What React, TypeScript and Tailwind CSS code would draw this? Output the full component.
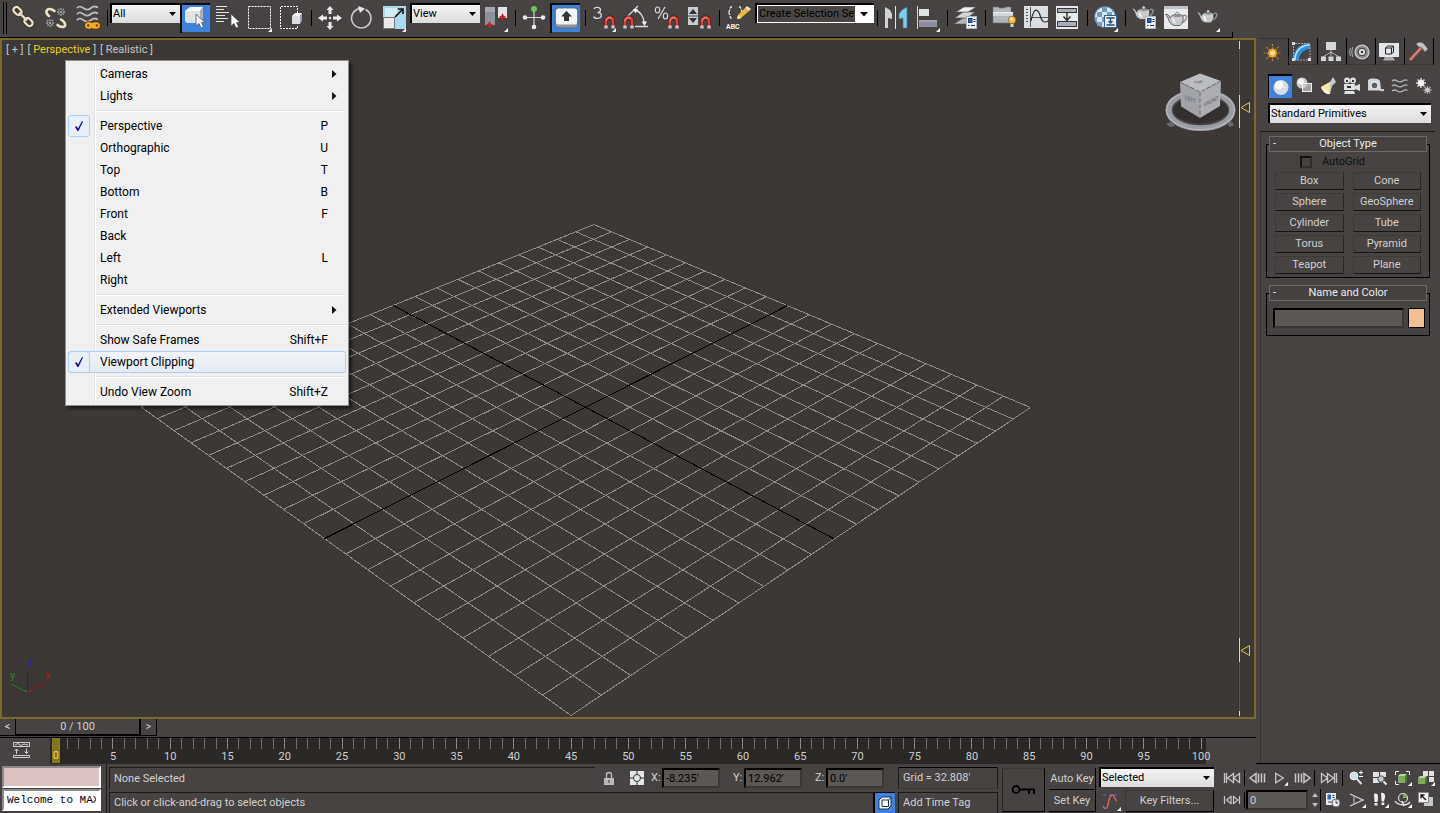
import type { ReactNode } from "react";

const UI = "font-['Roboto','Open_Sans',sans-serif]";

/* ---------- helpers ---------- */

function Flyout({ x = 28, y = 28 }: { x?: number; y?: number }) {
  return <path d={`M${x} ${y}v4h-4z`} fill="#fff" />;
}

function Tool({ label, active, fly, children }: { label: string; active?: boolean; fly?: boolean; children: ReactNode }) {
  return (
    <button type="button" aria-label={label} aria-pressed={active} className="block h-9 w-8 shrink-0">
      <svg width="32" height="36" viewBox="0 0 32 36" fill="none">
        {active && (
          <>
            <path d="M1 33V4h29" stroke="#0c0c0c" strokeWidth="2" />
            <rect x="2" y="5" width="28" height="27" fill="#3f82dc" />
          </>
        )}
        {children}
        {fly && <Flyout />}
      </svg>
    </button>
  );
}

function Sep() {
  return (
    <div className="flex h-9 w-[6px] shrink-0 items-center justify-center">
      <div className="h-4 w-px bg-black" />
    </div>
  );
}

function Picker({ label, value, className, options }: { label: string; value: string; className: string; options?: string[] }) {
  return (
    <div className={`relative shrink-0 border-l-2 border-t-2 border-black bg-linear-to-b from-[#f4f4f4] to-[#dcdcdc] ${className}`}>
      <select aria-label={label} defaultValue={value} className="block h-full w-full appearance-none bg-transparent pl-px text-[11px] leading-4 text-black outline-none">
        {(options ?? [value]).map((o) => (
          <option key={o}>{o}</option>
        ))}
      </select>
      <svg className="pointer-events-none absolute right-1 top-[7px]" width="7" height="4" viewBox="0 0 7 4">
        <path d="M0 0h7L3.500 4z" fill="#000" />
      </svg>
    </div>
  );
}

function Magnet({ x, y }: { x: number; y: number }) {
  return (
    <g transform={`translate(${x} ${y})`}>
      <path d="M2 10V5a3.500 3.500 0 0 1 7 0v5" stroke="#3a0f0f" strokeWidth="4" />
      <path d="M2 10V5a3.500 3.500 0 0 1 7 0v5" stroke="#d8403c" strokeWidth="2.800" />
      <path d="M2 5.500a3.500 3.500 0 0 1 5.500-3" stroke="#f29a92" strokeWidth="1" />
      <path d="M.3 9.500h3.400v3H.3zM7.300 9.500h3.400v3H7.300z" fill="#c4c7ce" />
    </g>
  );
}

function Teapot({ x = 0, y = 0, s = 1 }: { x?: number; y?: number; s?: number }) {
  return (
    <g transform={`translate(${x} ${y}) scale(${s})`}>
      <path d="M17 5.500c3-2.500 5-.5 3.500 2.500-.8 2-2.500 3.500-4.500 4" stroke="#8f9093" strokeWidth="1.500" />
      <path d="M0 3.500c2-.8 3.500.5 4.500 3.500l2-2.500c3-1.500 7.500-1.500 10.500 0 1.500 4 .3 7.500-2.500 10H8.500C5 13 4 11.500 3.300 9 2.500 6.500 1.500 5 0 3.500z" fill="#c9cacc" stroke="#48494c" strokeWidth=".8" />
      <path d="M7 5c3-1.200 6.500-1.200 9.500 0-3 1.200-6.500 1.200-9.500 0z" fill="#8b8c90" />
      <path d="M7.500 7.500c.3 2 1 3.500 2 4.500" stroke="#fff" strokeWidth="1.500" />
      <circle cx="11.700" cy="2.500" r="1.500" fill="#dcdcdc" stroke="#555" strokeWidth=".5" />
    </g>
  );
}

function Dialog({ x, y }: { x: number; y: number }) {
  return (
    <g transform={`translate(${x} ${y})`}>
      <rect x=".5" y=".5" width="10" height="12" fill="#f1f3f6" stroke="#a9b5c6" />
      <rect x="2.500" y="2.500" width="3.500" height="4" fill="#2a6bc4" stroke="#123d7b" />
      <path d="M7.500 3.500h2M7.500 5.500h2M2 9.500h1.500M5 9.500h4" stroke="#17365f" />
    </g>
  );
}

function Arrow({ x, y }: { x: number; y: number }) {
  return <path transform={`translate(${x} ${y})`} d="M0 0v12l3-2.500 2 4.500 2.500-1-2-4.500H9z" fill="#fff" stroke="#3d4654" strokeWidth=".7" />;
}

/* ---------- main toolbar ---------- */

function MainToolbar() {
  return (
    <header className="flex h-[38px] shrink-0 pr-[207px]">
      <div className="flex h-full flex-1 items-start border-b border-black">
        <div className="mr-px mt-[2px] flex h-8 w-[7px] shrink-0 gap-[2px] pl-[3px]">
          <div className="w-px bg-black" />
          <div className="w-px bg-black" />
        </div>
        <Tool label="Select and Link">
          <g stroke="#3c352b" strokeWidth="4.400">
            <rect x="5" y="8" width="9" height="6" rx="3" transform="rotate(42 9.500 11)" />
            <rect x="16" y="19" width="9" height="6" rx="3" transform="rotate(42 20.500 22)" />
          </g>
          <g stroke="#eadfc8" strokeWidth="2.300">
            <rect x="5" y="8" width="9" height="6" rx="3" transform="rotate(42 9.500 11)" />
            <rect x="16" y="19" width="9" height="6" rx="3" transform="rotate(42 20.500 22)" />
            <path d="M11 12.500l8 8" />
          </g>
        </Tool>
        <Tool label="Unlink Selection">
          <g stroke="#eee1c6" strokeWidth="2.600" strokeLinecap="round">
            <path d="M9 16c-4-3-3-7 .5-7 2 0 3.500.8 5 2" />
            <path d="M21 19.500c5 3 5.500 7.500 1.500 7.500-2 0-3.500-.8-5-2" />
          </g>
          <g stroke="#a4a7aa" strokeWidth="1.300" strokeDasharray="2 1">
            <path d="M17 12h8M21 8v8M18 9l6 6M24 9l-6 6M6 23h8M10 19v8M7 20l6 6M13 20l-6 6" />
          </g>
        </Tool>
        <Tool label="Bind to Space Warp">
          {[8, 14, 20].map((y) => (
            <path key={y} d={`M5 ${y}c3-3 5-1 7 .5s5 1.500 7-.5 4-2 7-.5`} stroke="#b8bbbd" strokeWidth="1.800" />
          ))}
          <path d="M14 25.500c0-3 6-3 6 0s-6 3-6 0zM20 25.500c0-3 7-3 7 0s-7 3-7 0z" stroke="#5a3c08" strokeWidth="3.800" />
          <path d="M14 25.500c0-3 6-3 6 0s-6 3-6 0zM20 25.500c0-3 7-3 7 0s-7 3-7 0zM17 25.500h7" stroke="#f2ae2b" strokeWidth="1.900" />
        </Tool>
        <Sep />
        <Picker label="Selection Filter" value="All" className="mt-[3px] h-5 w-[70px]" />
        <Tool label="Select Object" active>
          <path d="M5 11l5-4h13l-3 4z" fill="#fff" />
          <path d="M5 11h15v12H7l-2-2z" fill="#dfe3e8" />
          <path d="M20 11l3-4v12l-3 4z" fill="#a9b3c1" />
          <Arrow x={16} y={14} />
        </Tool>
        <Tool label="Select by Name">
          <path d="M4 6.500h11M4 9.500h8M4 12.500h13M4 15.500h9M4 18.500h12M4 21.500h8" stroke="#e4e4e4" />
          <Arrow x={19} y={14} />
        </Tool>
        <Tool label="Rectangular Selection Region" fly>
          <rect x="4.500" y="6.500" width="22" height="22" stroke="#fff" strokeDasharray="2 1" />
        </Tool>
        <Tool label="Window/Crossing">
          <path d="M21.500 13V6.500h-17v22h17V25" stroke="#fff" strokeDasharray="2 1" />
          <path d="M16 16l3-3h7l-2 3z" fill="#fff" />
          <path d="M16 16h8v8h-8z" fill="#dcdfe4" />
          <path d="M24 16l2-3v8l-2 3z" fill="#9aa2ad" />
        </Tool>
        <Sep />
        <Tool label="Select and Move">
          <path d="M16 6l3.500 4H17.500v4h-3v-4H12.500zM16 30l3.500-4H17.500v-4h-3v4H12.500zM4 18l5-3.500v2h4v3H9v2zM28 18l-5-3.500v2h-4v3h4v2z" fill="#ececec" />
          <circle cx="16" cy="18" r="1.200" fill="#ececec" />
        </Tool>
        <Tool label="Select and Rotate">
          <path d="M19.500 9.500A9.700 9.700 0 1 1 14 8.600" stroke="#c9c9c9" strokeWidth="1.600" />
          <path d="M12 6l7 2.500-5 4.500z" fill="#e6e6e6" />
        </Tool>
        <Tool label="Select and Uniform Scale" fly>
          <rect x="5" y="6" width="23" height="23" fill="#a9d9ee" />
          <path d="M7 8h12v9H7z" fill="#d2edf8" />
          <rect x="5.500" y="17.500" width="11" height="11" fill="#e9eaec" stroke="#777" />
          <path d="M17 17l7-7M20 9h5v5" stroke="#111" strokeWidth="1.600" />
        </Tool>
        <Picker label="Reference Coordinate System" value="View" className="mt-[3px] h-5 w-[70px]" />
        <Tool label="Use Pivot Point Center" fly>
          <path d="M5 7h10v18H5z" fill="#8d919b" />
          <path d="M5 7h10v5H5z" fill="#a5a8b1" />
          <path d="M18 7h9v11h-9z" fill="#e3e4e8" />
          <path d="M9.500 21l1.300 2.700 2.700 1.300-2.700 1.300-1.300 2.700-1.300-2.700L5.500 25l2.700-1.300zM22.500 13l1.300 2.700 2.700 1.300-2.700 1.300-1.300 2.700-1.300-2.700-2.700-1.300 2.700-1.300z" fill="#c41f1f" />
        </Tool>
        <Sep />
        <Tool label="Select and Manipulate">
          <path d="M16 10v17M7 17.500h18" stroke="#d9d9d9" strokeWidth="1.200" />
          <circle cx="16" cy="9" r="3" fill="#6cc45c" />
          <circle cx="16" cy="27" r="2.300" fill="#eee" />
          <circle cx="7" cy="17.500" r="2.300" fill="#eee" />
          <circle cx="25" cy="17.500" r="2.300" fill="#eee" />
        </Tool>
        <Tool label="Keyboard Shortcut Override" active>
          <rect x="5" y="8" width="23" height="20" rx="3" fill="#8d959f" stroke="#444d59" strokeWidth=".6" />
          <rect x="6" y="8.500" width="21" height="16" rx="2.500" fill="#f4f5f6" />
          <path d="M16.500 11l5.500 5.500h-3V21h-5v-4.500h-3z" fill="#333" />
        </Tool>
        <Sep />
        <Tool label="Snaps Toggle" fly>
          <path d="M6 9c.5-2 6.500-2.500 6.500 1 0 2-1.500 2.500-3 2.500 2 0 3.800.5 3.800 3 0 3.600-7 3.500-7.600 1" stroke="#d8d8d8" strokeWidth="1.300" />
          <Magnet x={16} y={16} />
        </Tool>
        <Tool label="Angle Snap Toggle">
          <path d="M8 16L18 6M15 26.500h13" stroke="#d8d8d8" strokeWidth="1.300" />
          <path d="M15 10c5 1 9 7 9.500 14" stroke="#e8e8e8" strokeWidth="1.300" />
          <path d="M13 9h5l-2.500 4.500zM21.500 21.500h5.500L24.500 26z" fill="#eee" />
          <Magnet x={3} y={16} />
        </Tool>
        <Tool label="Percent Snap Toggle">
          <path d="M13 7L6 19" stroke="#d8d8d8" strokeWidth="1.200" />
          <ellipse cx="5.500" cy="10" rx="2.200" ry="3" stroke="#d8d8d8" strokeWidth="1.200" />
          <ellipse cx="13.500" cy="16" rx="2.200" ry="3" stroke="#d8d8d8" strokeWidth="1.200" />
          <Magnet x={16} y={16} />
        </Tool>
        <Tool label="Spinner Snap Toggle">
          <rect x="4" y="7" width="10" height="18" fill="#c9ccd1" />
          <path d="M4 16h10" stroke="#44484f" />
          <path d="M9 9l4 5H5zM9 23l4-5H5z" fill="#2f3238" />
          <Magnet x={16} y={16} />
        </Tool>
        <Sep />
        <Tool label="Edit Named Selection Sets">
          <path d="M10 6.500c-3 0-1.500 6-4 6 2.500 0 1 6 4 6M17 6.500c3 0 1.500 6 4 6-2.500 0-1 6-4 6" stroke="#e4e4e4" strokeWidth="1.400" strokeDasharray="3 1" />
          <path d="M15 19l1-4L23 8l4 3-8 7z" fill="#f0b63a" />
          <path d="M23 8l2-2 4 3-2 2z" fill="#f1e3c4" />
          <path d="M15 19l1-4 3 3z" fill="#fbe6b4" />
          <text x="4" y="29" fill="#fff" fontSize="7" fontWeight="600" fontFamily="Roboto, sans-serif">ABC</text>
        </Tool>
        <div className="ml-px mt-[3px] flex h-5 w-[119px] shrink-0 border-l-2 border-t-2 border-black">
          <div className="flex w-full border border-white">
            <input aria-label="Named Selection Sets" defaultValue="Create Selection Set" className="w-[97px] min-w-0 bg-[#4a4645] pl-px text-[11px] leading-4 text-black outline-none" />
            <button type="button" aria-label="Open list" className="flex flex-1 items-center justify-center bg-white">
              <svg width="8" height="5" viewBox="0 0 8 5">
                <path d="M0 0h8L4 4.500z" fill="#000" />
              </svg>
            </button>
          </div>
        </div>
        <Sep />
        <Tool label="Mirror">
          <path d="M5 7l5 3 2 4v5l-4-1v10H5z" fill="#cfd2d6" />
          <path d="M15.500 6v23" stroke="#e2e2e2" />
          <path d="M27 7v21h-4V18l-4 1v-5l3-4z" fill="#82cbea" stroke="#3f7f9d" strokeWidth=".8" />
        </Tool>
        <Tool label="Align" fly>
          <path d="M5.500 6v23" stroke="#d5d5d5" />
          <rect x="7" y="9" width="10" height="7" fill="#dfe0e2" />
          <rect x="7" y="20" width="18" height="7" fill="#8e919c" />
          <path d="M7 21h18" stroke="#b9bbc4" />
        </Tool>
        <Sep />
        <Tool label="Layer Manager">
          <path d="M4 24l9-6h12l-9 6z" fill="#b8b8b8" stroke="#555" strokeWidth=".6" />
          <path d="M5 18l8-6h12l-8 6z" fill="#d4d4d4" stroke="#555" strokeWidth=".6" />
          <path d="M6 12l8-5h12l-8 5z" fill="#f0f0f0" stroke="#555" strokeWidth=".6" />
          <Dialog x={16} y={16} />
        </Tool>
        <Sep />
        <Tool label="Toggle Ribbon">
          <path d="M5 12V7h6v1h6V7h6v5h2v11H5z" fill="#b3b6bb" stroke="#6d6f75" strokeWidth=".7" />
          <path d="M5 12h20v4H5z" fill="#d4d6d9" />
          <path d="M5 12.500h20" stroke="#eee" />
          <circle cx="24" cy="20" r="3.800" fill="#f9c443" stroke="#8a5a08" strokeWidth=".7" />
          <circle cx="23.500" cy="19" r="1.500" fill="#fff3c2" />
          <rect x="22.500" y="24" width="3" height="3" fill="#d5d5d5" />
        </Tool>
        <Tool label="Curve Editor">
          <rect x="4" y="6" width="24" height="22" fill="#dcdee1" />
          <path d="M6 9.500h2M6 12.500h2M6 15.500h2M6 18.500h2M6 21.500h2M10.500 7v20M10 17.500h18" stroke="#53565b" />
          <path d="M11 21c3-15 7-13 10-3 1 4 4 5 7 3" stroke="#26292e" strokeWidth="1.200" />
        </Tool>
        <Tool label="Schematic View">
          <rect x="4" y="6" width="22" height="23" fill="#e7e9eb" />
          <rect x="5.500" y="8.500" width="19" height="4" fill="#a9adb5" stroke="#33363b" />
          <rect x="5.500" y="21.500" width="19" height="5" fill="#a9adb5" stroke="#33363b" />
          <path d="M15 12v7M11.500 16.500l3.500 4 3.500-4" stroke="#222" strokeWidth="1.300" />
        </Tool>
        <Sep />
        <Tool label="Material Editor" fly>
          <circle cx="15" cy="17" r="10.500" fill="#dbe8f2" stroke="#5c7fa0" />
          <path d="M12 7h5v5h-5zM7 12h5v5H7zM17 12h5v5h-5zM12 17h5v5h-5zM7 22h5v4H7zM22 9l3 3h-3zM5 17h2v5H5z" fill="#6f9cc4" />
          <rect x="14.500" y="15.500" width="12" height="12" fill="#eaf0f8" stroke="#3c5e92" />
          <path d="M16.500 18h8M16.500 25h8M20.500 18v5M18.500 21l2 2 2-2" stroke="#23467c" strokeWidth="1.300" />
        </Tool>
        <Sep />
        <Tool label="Render Setup">
          <Teapot x={4} y={5} />
          <Dialog x={17} y={16} />
        </Tool>
        <Tool label="Rendered Frame Window">
          <rect x="4" y="6" width="24" height="23" fill="#e9eaeb" />
          <path d="M4 6h24v3H4z" fill="#bfc2c6" />
          <Teapot x={5.500} y={11} />
        </Tool>
        <Tool label="Render Production" fly>
          <Teapot x={5} y={9} s={0.950} />
        </Tool>
      </div>
      <div className="mt-8 w-px bg-black" />
    </header>
  );
}

/* ---------- viewport ---------- */

type Pt = [number, number];

/* Projects the unit square of the ground plane onto the screen. */
function project([a, b, c, d]: [Pt, Pt, Pt, Pt]) {
  const sx = a[0] - b[0] + c[0] - d[0];
  const sy = a[1] - b[1] + c[1] - d[1];
  const dx1 = b[0] - c[0];
  const dx2 = d[0] - c[0];
  const dy1 = b[1] - c[1];
  const dy2 = d[1] - c[1];
  const det = dx1 * dy2 - dx2 * dy1;
  const g = (sx * dy2 - dx2 * sy) / det;
  const h = (dx1 * sy - sx * dy1) / det;
  return (u: number, v: number): Pt => {
    const w = g * u + h * v + 1;
    return [
      ((b[0] - a[0] + g * b[0]) * u + (d[0] - a[0] + h * d[0]) * v + a[0]) / w,
      ((b[1] - a[1] + g * b[1]) * u + (d[1] - a[1] + h * d[1]) * v + a[1]) / w,
    ];
  };
}

const CELLS = 20;
const at = project([
  [594, 224.5],
  [1030.5, 407.5],
  [571, 715.5],
  [141, 407],
]);

function seg(p: Pt, q: Pt) {
  return `M${p[0].toFixed(1)} ${p[1].toFixed(1)}L${q[0].toFixed(1)} ${q[1].toFixed(1)}`;
}

const gridPath = Array.from({ length: CELLS + 1 }, (_, i) => i / CELLS)
  .filter((t) => t !== 0.5)
  .map((t) => seg(at(t, 0), at(t, 1)) + seg(at(0, t), at(1, t)))
  .join("");
const axisPath = seg(at(0.5, 0), at(0.5, 1)) + seg(at(0, 0.5), at(1, 0.5));

function Scene() {
  return (
    <svg className="absolute inset-0 h-full w-full" fill="none" aria-hidden="true">
      <g transform="translate(-2 -40)">
        <g shapeRendering="crispEdges">
          <path d={gridPath} stroke="#8c8987" />
          <path d={axisPath} stroke="#000" />
          <path d="M27.500 671v21" stroke="#1c1c9c" />
          <path d="M27.500 692L11 684" stroke="#22801f" />
          <path d="M27.500 692L45 683.500" stroke="#a81414" />
          <path d="M1238.500 41v676" stroke="#3a3126" />
          <path d="M1239.500 41v676" stroke="#65533c" />
          <path d="M1239.500 41v8M1239.500 95v33M1239.500 638v24M1239.500 711v5" stroke="#e8d9a4" />
        </g>
        <g fontFamily="Roboto, sans-serif" fontSize="11">
          <text x="27" y="666" fill="#2020c0">z</text>
          <text x="10" y="679" fill="#2c8a28">y</text>
          <text x="45" y="679" fill="#b01818">x</text>
        </g>
        <path d="M1249.500 102.500v10l-8.500-5zM1249.500 645.500v10l-8.500-5z" stroke="#e6c73c" />
        {/* view cube */}
        <ellipse cx="1200" cy="109.500" rx="30" ry="16" fill="#2f2c2b" opacity=".7" />
        <ellipse cx="1200.500" cy="110" rx="31.500" ry="17.500" stroke="#999ba1" strokeWidth="7" />
        <ellipse cx="1200.500" cy="110" rx="28" ry="14.500" stroke="#44444a" strokeWidth="1.500" />
        <ellipse cx="1200.500" cy="110" rx="34" ry="19.500" stroke="#b1b3b8" strokeWidth="1.500" />
        <path d="M1166 124l6-3 3 5-5 1zM1227 124l4-3 3 4-4 2z" fill="#666870" />
        <path d="M1180 82l20-8.500 21 7.500-21 11z" fill="#bcbdc0" />
        <path d="M1180 82l20 10.500v25.500l-19-11.500z" fill="#a2a3a9" />
        <path d="M1200 92.500l21-11.500-1 25-20 12z" fill="#acadb3" />
        <path d="M1180 82l20 10 21-11M1200 92.500V118" stroke="#6c6d73" strokeDasharray="4 2" />
        <g fontFamily="Liberation Sans, sans-serif" fontWeight="700" fill="#707177">
          <text transform="matrix(.7 .3 0 1 1185 99)" fontSize="6">LEFT</text>
          <text transform="matrix(.7 -.35 0 1 1204 107)" fontSize="6">FRONT</text>
          <text transform="matrix(.7 -.1 .4 .6 1195 84)" fontSize="6">TOP</text>
        </g>
      </g>
    </svg>
  );
}

type Item = { label: string; keys?: string; sub?: boolean; checked?: boolean; hot?: boolean };

const MENU: Item[][] = [
  [
    { label: "Cameras", sub: true },
    { label: "Lights", sub: true },
  ],
  [
    { label: "Perspective", keys: "P", checked: true },
    { label: "Orthographic", keys: "U" },
    { label: "Top", keys: "T" },
    { label: "Bottom", keys: "B" },
    { label: "Front", keys: "F" },
    { label: "Back" },
    { label: "Left", keys: "L" },
    { label: "Right" },
  ],
  [{ label: "Extended Viewports", sub: true }],
  [
    { label: "Show Safe Frames", keys: "Shift+F" },
    { label: "Viewport Clipping", checked: true, hot: true },
  ],
  [{ label: "Undo View Zoom", keys: "Shift+Z" }],
];

function ViewMenu() {
  return (
    <div role="menu" aria-label="Point of view" className="absolute left-[63px] top-5 w-[284px] border border-[#8f8f8f] bg-[#f0f0f0] p-[2px] text-[12px] text-black shadow-[3px_3px_3px_rgba(0,0,0,0.5)]">
      <div className="bg-[linear-gradient(to_right,transparent_26px,#e2e3e3_26px,#e2e3e3_27px,#fff_27px,#fff_28px,transparent_28px)]">
        {MENU.map((group, g) => (
          <div key={g}>
            {g > 0 && (
              <div role="separator" className="flex h-2 items-center pl-7">
                <div className="h-[2px] w-full border-b border-white bg-[#e0e0e0]" />
              </div>
            )}
            {group.map((it) => (
              <button
                key={it.label}
                type="button"
                role={it.checked ? "menuitemcheckbox" : "menuitem"}
                aria-checked={it.checked}
                className={`flex h-[22px] w-full items-center rounded-[3px] text-left ${it.hot ? "bg-linear-to-b from-[#f2f4f7] to-[#e4ebf5] outline outline-1 -outline-offset-1 outline-[#aecff7]" : ""}`}
              >
                <span className={`flex size-[22px] shrink-0 items-center justify-center rounded-[3px] ${it.checked ? "border border-[#aecff7] bg-[#e9f0fa]" : ""}`}>
                  {it.checked && (
                    <svg width="10" height="12" viewBox="0 0 10 12">
                      <path d="M1 7l1.500-1 1.500 2.500L8 1l1 .5L4.500 11H3.500z" fill="#12128c" />
                    </svg>
                  )}
                </span>
                <span className="ml-[10px] flex-1">{it.label}</span>
                {it.keys && <span className="mr-[18px]">{it.keys}</span>}
                {it.sub && (
                  <svg className="mr-[9px]" width="5" height="8" viewBox="0 0 5 8">
                    <path d="M0 0l4.500 4L0 8z" fill="#111" />
                  </svg>
                )}
              </button>
            ))}
          </div>
        ))}
      </div>
    </div>
  );
}

function Viewport() {
  return (
    <main className="relative min-h-[640px] flex-1 overflow-hidden border-2 border-[#7b682c] bg-[#3c3836]">
      <Scene />
      <div className="relative flex gap-1 pl-1 pt-[2px] text-[11px] leading-4 text-[#c4c4c4]">
        <button type="button">[ + ]</button>
        <button type="button">
          [ <span className="text-[#e8cf1e]">Perspective</span> ]
        </button>
        <button type="button">[ Realistic ]</button>
      </div>
      <ViewMenu />
    </main>
  );
}

/* ---------- time slider and track bar ---------- */

function TimeSlider() {
  return (
    <div className="flex h-[18px] shrink-0 text-[11px] leading-4 text-[#d0d0d0]">
      <button type="button" aria-label="Previous frame" className="h-[17px] w-4 border-b border-r border-black">&lt;</button>
      <button type="button" className="h-[17px] w-[125px] border-b-2 border-r-2 border-black">0 / 100</button>
      <button type="button" aria-label="Next frame" className="h-[17px] w-4 border-b border-r border-black">&gt;</button>
    </div>
  );
}

function TrackBar() {
  return (
    <div className="flex h-[27px] shrink-0 border-t border-black pr-[50px]">
      <button type="button" aria-label="Open Mini Curve Editor" className="w-[50px] shrink-0">
        <svg width="50" height="26" viewBox="0 0 50 26" fill="none" stroke="#cfcfcf">
          <path d="M13.500 4.500h16v4h-16zM13.500 17.500h16v2h-16zM15 7l3-1.500 3 2 3-1.500 4 1" />
          <path d="M16.500 16v-5M14.500 13l2-2 2 2M26.500 10.500v5M24.500 13.500l2 2 2-2" />
        </svg>
      </button>
      <div className="flex flex-1 bg-[#2a2826] text-[11px] leading-3 text-[#cfcfcf]">
        {Array.from({ length: 101 }, (_, f) => (
          <div key={f} className="flex min-w-0 flex-1 flex-col items-center">
            {f === 0 ? (
              <div className="flex h-[25px] w-2 flex-col items-center justify-end border border-[#8d7f24] bg-[#83771c] text-[#e6d75c]">0</div>
            ) : (
              <>
                <div className={`h-[11px] w-px ${f % 5 === 0 ? "bg-[#8a8886]" : "bg-[#716f6d]"}`} />
                {f % 5 === 0 && <div className="mt-[2px] flex w-0 justify-center whitespace-nowrap">{f}</div>}
              </>
            )}
          </div>
        ))}
      </div>
    </div>
  );
}

/* ---------- command panel ---------- */

const TABS: [string, ReactNode][] = [
  ["Create", <g key="c"><path d="M12.500 5v18M3.500 14h18M6.500 8l12 12M18.500 8l-12 12" stroke="#c4832f" strokeWidth="1.200" strokeDasharray="2 1" /><circle cx="12.500" cy="14" r="4.500" fill="#f59a23" /><circle cx="12.500" cy="14" r="2.500" fill="#ffe7a1" /></g>],
  ["Modify", <g key="m"><path d="M4 22C4 12 11 5 21 5v6c-6 0-11 5-11 11z" fill="#2f8fd8" /><path d="M6 22C6 13 12 7 21 7" stroke="#b8e2fa" strokeWidth="1.500" /><path d="M4.500 22V5.500H21M21 6v16H5" stroke="#a5a5a5" strokeDasharray="2 1" /><path d="M3 4h3v3H3zM19 20h3v3h-3zM3 20h3v3H3z" fill="#ddd" /></g>],
  ["Hierarchy", <g key="h"><rect x="8" y="4" width="10" height="8" fill="#d6d7d9" /><path d="M13 12v6M5 19l8-5 8 5" stroke="#bbb" /><path d="M3 18.500h5v4.500H3zM10.500 18.500h5v4.500h-5zM18 18.500h5v4.500h-5z" fill="#d6d7d9" /></g>],
  ["Motion", <g key="o"><circle cx="15" cy="14" r="7" fill="#8d8e90" stroke="#d2d2d2" strokeWidth="1.200" /><circle cx="15" cy="14" r="3.800" fill="#dcdcdc" stroke="#333" /><circle cx="15" cy="14" r="1.200" fill="#333" /><path d="M6 9c-1.500 3-1.500 7 0 10M3.500 10c-1 3-1 5 0 8" stroke="#b0b0b0" /></g>],
  ["Display", <g key="d"><path d="M3 5h20v14H3z" fill="#e3e5e8" /><path d="M9 19h8l2 3.500H7z" fill="#a8aaad" /><path d="M9.500 10l2-2h6v6l-2 2h-6zM9.500 10h6v6M15.500 10l2-2" stroke="#222" /></g>],
  ["Utilities", <g key="u"><path d="M16 10L5 22" stroke="#9b4f45" strokeWidth="4" /><path d="M16 10L5 22" stroke="#d3968c" strokeWidth="1.500" /><path d="M11 6c3-2.500 6-2 8 0l4 5-3 3-3-4-3-1z" fill="#bfc1c5" stroke="#666" strokeWidth=".6" /></g>],
];

const CATEGORIES: [string, ReactNode][] = [
  ["Geometry", <g key="g"><circle cx="12" cy="12.500" r="7.500" fill="#d9dde3" /><circle cx="10" cy="10" r="4" fill="#fff" /></g>],
  ["Shapes", <g key="s"><circle cx="10" cy="9" r="5.500" fill="#c7c9cc" /><circle cx="9" cy="7.500" r="3" fill="#f2f2f2" /><rect x="10.500" y="9.500" width="9" height="8" fill="#c9cbd0" fillOpacity=".7" stroke="#f2f2f2" /></g>],
  ["Lights", <g key="l"><path d="M17 3l-3 5-9 5 4 6 5 1 2-8 4-4z" fill="#c9cacc" /><path d="M5 13l9-5-1 12-4-2z" fill="#fbe9a4" /><path d="M5 13c2 0 8 4 9 7-4 1-8-3-9-7z" fill="#fff8d8" /></g>],
  ["Cameras", <g key="c"><circle cx="7" cy="6.500" r="3" fill="#dedfe1" /><circle cx="13" cy="6.500" r="3" fill="#dedfe1" /><path d="M6 6h2v2H6zM12 6h2v2h-2z" fill="#333" /><path d="M4 10h11v6H4zM15 12l5-2v7l-5-2zM5 17h9l1 3H4z" fill="#dedfe1" /><path d="M7 12h4v2H7z" fill="#333" /></g>],
  ["Helpers", <g key="h"><path d="M4 6c3-2 10-2 12 1l1 8h3v1.500H4z" fill="#d4d6d9" /><circle cx="10.500" cy="11.500" r="3.500" fill="#5e6166" stroke="#fff" /><path d="M16 16.500h4" stroke="#bbb" strokeWidth="1.500" /></g>],
  ["Space Warps", <g key="w" stroke="#b3b6b9" strokeWidth="1.300"><path d="M4 7c3-2.500 4-.5 6 .5s4 0 5.500-1 2.500-1 4 0M4 12c3-2.500 4-.5 6 .5s4 0 5.500-1 2.500-1 4 0M4 17c3-2.500 4-.5 6 .5s4 0 5.500-1 2.500-1 4 0" /></g>],
  ["Systems", <g key="y"><path d="M9 4v10M4 9h10M5.500 5.500l7 7M12.500 5.500l-7 7" stroke="#d9dadc" strokeWidth="1.500" /><circle cx="9" cy="9" r="3" fill="#fff" /><path d="M15.500 12v8M11.500 16h8M12.500 13l6 6M18.500 13l-6 6" stroke="#a9abad" strokeWidth="1.300" /><circle cx="15.500" cy="16" r="2.200" fill="#c9c9c9" /></g>],
];

const PRIMITIVES = ["Box", "Cone", "Sphere", "GeoSphere", "Cylinder", "Tube", "Torus", "Pyramid", "Teapot", "Plane"];

function Rollout({ title, children }: { title: string; children: ReactNode }) {
  return (
    <section className="relative">
      <div className="absolute inset-x-0 bottom-0 top-2 border border-black" />
      <div className="relative px-[3px]">
        <button type="button" aria-expanded="true" className="flex h-4 w-full items-center border border-[#6d6967] bg-[#444140] px-[3px] text-[11px] leading-3 text-[#ececec]">
          <span className="w-2 text-left">-</span>
          <span className="flex-1 pr-2 text-center">{title}</span>
        </button>
      </div>
      <div className="relative">{children}</div>
    </section>
  );
}

function CommandPanel() {
  return (
    <aside className="flex w-[184px] shrink-0 flex-col border-b border-black pl-1 text-[11px] text-[#cfcfcf]">
      <div role="tablist" className="flex h-[27px]">
        {TABS.map(([name, icon], i) => (
          <button key={name} type="button" role="tab" aria-selected={i === 0} aria-label={name} className={`flex h-[27px] w-[29px] items-center border-r border-black ${i === 0 ? "border-t border-t-[#37322f]" : "border-b border-b-[#3a3735]"}`}>
            <svg width="26" height="26" viewBox="0 0 26 26" fill="none">{icon}</svg>
          </button>
        ))}
      </div>
      <div className="mt-[9px] flex h-6 pl-2">
        {CATEGORIES.map(([name, icon], i) => (
          <button key={name} type="button" aria-label={name} className={`size-6 shrink-0 ${i === 0 ? "border-l border-t-2 border-black bg-[#3f82dc]" : ""}`}>
            <svg className={i === 0 ? "-mt-px" : ""} width="24" height="24" viewBox="0 0 24 24" fill="none">{icon}</svg>
          </button>
        ))}
      </div>
      <Picker label="Object category" value="Standard Primitives" className="ml-2 mr-[9px] mt-[5px] h-5" />
      <div className="mr-[5px] mt-2 flex flex-1 flex-col gap-[7px] border-l border-t border-l-[#35312f] border-t-[#1d1b1a] px-[5px] pt-1">
        <Rollout title="Object Type">
          <label className="flex h-5 items-center gap-[10px] pl-[34px] text-[#121110]">
            <input type="checkbox" className="size-3 appearance-none border-2 border-[#161413] border-b-[#332f2d] border-r-[#332f2d]" />
            AutoGrid
          </label>
          <div className="grid grid-cols-2 gap-x-[9px] gap-y-[3px] px-[9px] pb-1">
            {PRIMITIVES.map((p) => (
              <button key={p} type="button" className="h-[18px] border border-b-[#171514] border-l-[#3b3836] border-r-[#2a2726] border-t-[#3d3a38] leading-4">
                {p}
              </button>
            ))}
          </div>
        </Rollout>
        <Rollout title="Name and Color">
          <div className="flex h-[35px] gap-1 pl-[7px] pr-[5px] pt-[7px]">
            <input aria-label="Object name" className="h-5 min-w-0 flex-1 border-2 border-b-[#3a3735] border-l-black border-r-[#3a3735] border-t-black bg-[#5b5755] px-1" />
            <button type="button" aria-label="Object color" className="h-5 w-[17px] border border-black bg-[#f3c18f]" />
          </div>
        </Rollout>
      </div>
    </aside>
  );
}

/* ---------- status bar ---------- */

function Coord({ axis, value }: { axis: string; value: string }) {
  return (
    <label className="flex items-center gap-[3px]">
      <span className="w-2">{axis}:</span>
      <input defaultValue={value} className="h-5 w-[58px] border-2 border-b-[#3a3735] border-l-black border-r-[#3a3735] border-t-black bg-[#5b5755] px-[2px] text-black" />
    </label>
  );
}

function Small({ label, w, children }: { label: string; w: string; children: ReactNode }) {
  return (
    <button type="button" aria-label={label} className={`flex h-[22px] shrink-0 items-center justify-center ${w}`}>
      <svg width="22" height="22" viewBox="0 0 22 22" fill="none">{children}</svg>
    </button>
  );
}

function VLine() {
  return <div className="my-[3px] w-px shrink-0 bg-black" />;
}

function StatusBar() {
  const play = "stroke-[#c8c8c8]";
  return (
    <footer className="flex h-[49px] shrink-0 text-[11px] leading-4 text-[#cfcfcf]">
      <div className="ml-[2px] mt-[2px] flex w-[99px] shrink-0 flex-col gap-px">
        <input aria-label="Macro recorder" className="h-[22px] w-full border-2 border-white border-l-[#8a8a8a] border-t-[#8a8a8a] bg-[#dcc3c3]" />
        <input aria-label="Script listener" defaultValue="Welcome to MAXScript" className="h-[22px] w-full border-2 border-white border-l-[#8a8a8a] border-t-[#8a8a8a] bg-white px-[3px] font-['Liberation_Mono',monospace] text-[11px] text-black" />
      </div>
      <div className="ml-[5px] mr-[2px] w-px shrink-0 bg-[#1d1b1a]" />
      <div className="flex min-w-0 flex-1 flex-col gap-[3px] pt-[3px]">
        <div className="flex h-[22px]">
          <div className="flex flex-1 items-center border-l border-t border-[#1d1b1a] pl-1">None Selected</div>
          <div className="flex w-[303px] items-center">
            <Small label="Selection lock" w="w-7">
              <path d="M8.500 11V8a2.500 2.500 0 0 1 5 0v3" stroke="#bdbdbd" strokeWidth="1.300" />
              <rect x="6" y="11" width="10" height="7" fill="#b9b9b9" />
              <path d="M11 13v3" stroke="#333" />
            </Small>
            <Small label="Absolute mode" w="w-7">
              <rect x="4" y="4" width="14" height="14" fill="#e4e6e8" />
              <circle cx="11" cy="11" r="3.500" stroke="#333" />
              <path d="M11 4v3.500M11 14.500V18M4 11h3.500M14.500 11H18" stroke="#333" />
            </Small>
            <div className="flex gap-[13px]">
              <Coord axis="X" value="-8.235'" />
              <Coord axis="Y" value="12.962'" />
              <Coord axis="Z" value="0.0'" />
            </div>
          </div>
          <div className="flex w-[100px] items-center border border-b-[#3a3735] border-l-[#1d1b1a] border-r-[#1d1b1a] border-t-black pl-1">Grid = 32.808'</div>
        </div>
        <div className="flex flex-1">
          <div className="flex flex-1 items-center border-l border-t border-[#1d1b1a] pl-1">Click or click-and-drag to select objects</div>
          <button type="button" aria-label="Adaptive degradation" className="mr-[3px] flex w-[22px] items-center justify-center border-l-2 border-t border-black bg-[#3f82dc]">
            <svg width="14" height="14" viewBox="0 0 14 14" fill="none">
              <path d="M1 4l3-3h9v9l-3 3H1z" fill="#fff" stroke="#14305c" />
              <path d="M4 4h6.500v6.500H4zM10.500 4L13 1.500" stroke="#14305c" />
            </svg>
          </button>
          <button type="button" className="flex w-[100px] items-center border border-b-0 border-[#1d1b1a] pl-1">Add Time Tag</button>
        </div>
      </div>
      <button type="button" aria-label="Set keys" className="ml-1 mt-1 flex h-[44px] w-[43px] shrink-0 items-center justify-center border border-b-black border-l-[#2a2726] border-r-black border-t-[#3a3735]">
        <svg width="26" height="14" viewBox="0 0 26 14" fill="none">
          <circle cx="5" cy="6.500" r="3.500" stroke="#000" strokeWidth="1.800" />
          <path d="M9 6.500h15M18 7v4M23 7v4" stroke="#000" strokeWidth="2" />
        </svg>
      </button>
      <div className="ml-1 mt-1 flex w-[47px] shrink-0 flex-col whitespace-nowrap">
        <button type="button" className="h-[22px] border-b border-r border-black">Auto Key</button>
        <button type="button" className="h-[22px] border-b border-r border-black">Set Key</button>
      </div>
      <div className="ml-[3px] mt-[3px] flex w-[115px] shrink-0 flex-col gap-[3px]">
        <Picker label="Key selection" value="Selected" className="h-5" />
        <div className="flex h-[22px]">
          <Small label="Default in/out tangents" w="w-[26px]">
            <path d="M2 16c2 4 4 3 5-1 1-5 1.500-10 4-10s2.500 5 5 6" stroke="#e06a62" strokeWidth="1.300" />
            <path d="M2 5h3M8 5h2M12 5h4M2 18h3" stroke="#5a6ed8" />
            <path d="M20 17v4h-4z" fill="#fff" />
          </Small>
          <button type="button" className="flex-1 border border-b-black border-l-[#3a3735] border-r-black border-t-[#3a3735]">Key Filters...</button>
        </div>
      </div>
      <div className="ml-[5px] mt-[3px] flex w-[126px] shrink-0 flex-col">
        <div className="flex h-[22px]">
          <Small label="Go to start" w="w-[25px]"><path className={play} d="M3.500 6v10M5.500 6v10M12.500 6.500v9L6.500 11zM18.500 6.500v9L12.500 11z" strokeWidth="1.300" /></Small>
          <VLine />
          <Small label="Previous key" w="w-[24px]"><path className={play} d="M10 6.500v9L4 11zM12.500 6.500v9M15.500 6.500v9M18.500 6.500v9" strokeWidth="1.500" /></Small>
          <Small label="Play" w="w-[21px]"><path className={play} d="M7 6l8 5-8 5z" strokeWidth="1.300" /><path d="M20 15v4h-4z" fill="#fff" /></Small>
          <Small label="Next key" w="w-[24px]"><path className={play} d="M13 6.500v9l6-4.500zM4.500 6.500v9M7.500 6.500v9M10.500 6.500v9" strokeWidth="1.500" /></Small>
          <VLine />
          <Small label="Go to end" w="w-[27px]"><path className={play} d="M18.500 6v10M16.500 6v10M9.500 6.500v9l6-4.500zM3.500 6.500v9l6-4.500z" strokeWidth="1.300" /></Small>
          <VLine />
        </div>
        <div className="flex h-[22px]">
          <Small label="Key mode" w="w-[25px]"><path className={play} d="M3.500 7v8M18.500 7v8M10 7.500v7L5.500 11zM12.500 7.500v7L17 11z" strokeWidth="1.200" /></Small>
          <VLine />
          <input aria-label="Current frame" defaultValue="0" className="ml-px mt-px h-5 w-[62px] border-2 border-b-[#3a3735] border-l-black border-r-[#3a3735] border-t-black bg-[#5b5755] px-[2px]" />
          <div className="ml-px flex w-3 flex-col border-r border-black pt-px">
            <button type="button" aria-label="Next" className="flex h-[10px] items-center justify-center">
              <svg width="6" height="4" viewBox="0 0 6 4"><path d="M0 4l3-4 3 4z" fill="#bdbdbd" /></svg>
            </button>
            <button type="button" aria-label="Back" className="flex h-[10px] items-center justify-center">
              <svg width="6" height="4" viewBox="0 0 6 4"><path d="M0 0l3 4 3-4z" fill="#bdbdbd" /></svg>
            </button>
          </div>
          <Small label="Time configuration" w="w-[24px]">
            <rect x="4" y="4" width="10" height="12" fill="#e7e9ec" />
            <rect x="5.500" y="5.500" width="3.500" height="5" fill="#2a6bc4" />
            <path d="M10.500 6.500h2M10.500 8.500h2M6 13h5" stroke="#444" />
            <circle cx="14" cy="14" r="4" fill="#eee" stroke="#5d6878" />
            <path d="M14 11.500V14h2" stroke="#333" />
          </Small>
        </div>
      </div>
      <div className="mr-[3px] mt-[3px] grid shrink-0 grid-cols-[23px_23px_23px_23px] content-start">
        <Small label="Zoom" w="w-[23px]">
          <circle cx="8" cy="9" r="4" fill="#c9e4ec" stroke="#eee" />
          <path d="M11 12l4.500 5" stroke="#ddd" strokeWidth="2" />
          <path d="M17 5.500h-4M15 3.500v4M13 9.500h4" stroke="#fff" />
        </Small>
        <Small label="Zoom All" w="w-[23px]">
          <path d="M4 5h6v5H4zM11 5h6v5h-6zM4 11h6v5H4z" fill="#dfe1e4" />
          <circle cx="12" cy="12" r="3.200" fill="#b9cdd3" stroke="#555" />
          <path d="M14.500 14.500l3 3" stroke="#eee" strokeWidth="2" />
        </Small>
        <Small label="Zoom Extents" w="w-[23px]">
          <path d="M3.500 8V4.500H7M14 4.500h3.500V8M3.500 14v3.500H7" stroke="#eee" />
          <path d="M6 9l2-2h7l-2 2z" fill="#b7d99c" /><path d="M6 9h7v7H6z" fill="#7cab5c" /><path d="M13 9l2-2v7l-2 2z" fill="#4c7a33" />
          <path d="M20 15v4h-4z" fill="#fff" />
        </Small>
        <Small label="Zoom Extents All" w="w-[23px]">
          <path d="M8 4h5v5H8zM14 4h5v5h-5zM14 10h5v5h-5z" fill="#dfe1e4" />
          <path d="M3 11l2-2h7l-2 2z" fill="#b7d99c" /><path d="M3 11h7v6H3z" fill="#7cab5c" /><path d="M10 11l2-2v6l-2 2z" fill="#4c7a33" />
          <path d="M20 15v4h-4z" fill="#fff" />
        </Small>
        <Small label="Field of View" w="w-[23px]">
          <path d="M4 5l13 6-13 6" stroke="#d4d4d4" strokeWidth="1.300" /><path d="M8 7v8" stroke="#a8a8a8" strokeWidth="1.300" />
          <path d="M20 15v4h-4z" fill="#fff" />
        </Small>
        <Small label="Walk Through" w="w-[23px]">
          <path d="M5 5c3-1.500 4.500 1 4 4l-.5 4H5.500zM12 4c3-1 4.500 1.500 4 4.500l-1 4h-2.500zM5.500 14h3v2.500h-3zM12.500 13.500h2.800V16h-2.800z" fill="#eee" />
          <path d="M20 15v4h-4z" fill="#fff" />
        </Small>
        <Small label="Orbit" w="w-[23px]">
          <circle cx="11" cy="9" r="4.500" stroke="#ddd" strokeWidth="1.200" /><path d="M11 9V5a4 4 0 0 1 4 4z" fill="#7cab5c" />
          <path d="M3 12c3 5 12 5 15 1M10 12l2 5" stroke="#eee" strokeWidth="1.300" />
          <path d="M20 15v4h-4z" fill="#fff" />
        </Small>
        <Small label="Maximize Viewport Toggle" w="w-[23px]">
          <path d="M9 8h9v9H9z" fill="#c4c6c9" />
          <rect x="3.500" y="3.500" width="10" height="10" fill="#f2f2f2" stroke="#888" />
          <path d="M6 6l5 5M6 9.500V6h3.500" stroke="#111" strokeWidth="1.300" />
        </Small>
      </div>
    </footer>
  );
}

export default function App() {
  return (
    <div className={`flex min-h-screen flex-col bg-[#474342] ${UI}`}>
      <MainToolbar />
      <div className="flex flex-1">
        <div className="flex min-w-0 flex-1 flex-col">
          <Viewport />
          <TimeSlider />
          <TrackBar />
        </div>
        <CommandPanel />
      </div>
      <StatusBar />
    </div>
  );
}
